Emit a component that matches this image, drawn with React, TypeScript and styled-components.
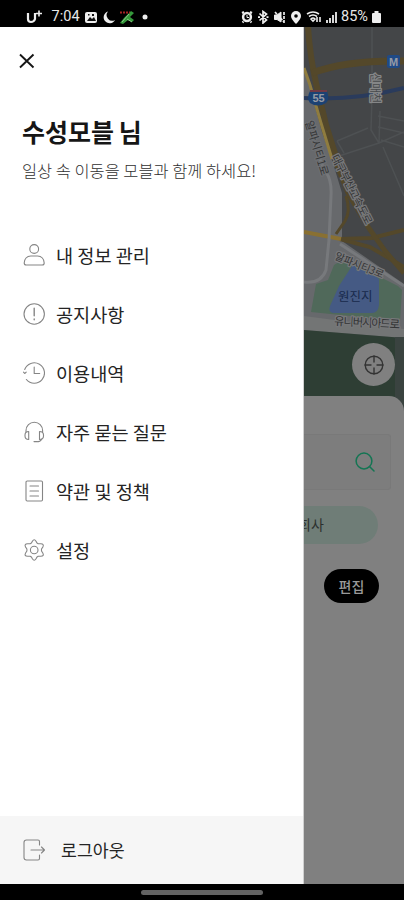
import React from "react";
import styled, { createGlobalStyle } from "styled-components";

const Global = createGlobalStyle`
  * { box-sizing: border-box; }
  body { margin: 0; background: #000; font-family: "Noto Sans CJK KR", "Noto Sans", sans-serif; }
  svg { display: block; flex: none; }
  button { font: inherit; border: 0; padding: 0; background: none; color: inherit; }
`;

const Screen = styled.div`
  width: 404px;
  height: 900px;
  display: flex;
  flex-direction: column;
  background: #000;
  overflow: hidden;
`;

const StatusBar = styled.header`
  height: 27px;
  flex: none;
  display: flex;
  align-items: center;
  justify-content: space-between;
  padding: 7px 23px 0 26px;
  color: #e8e8e8;
`;

const StatusGroup = styled.div<{ $gap: number }>`
  display: flex;
  align-items: center;
  gap: ${(p) => p.$gap}px;
`;

const StatusText = styled.span<{ $w: number }>`
  font: 400 14.5px/18px Roboto, sans-serif;
  width: ${(p) => p.$w}px;
  white-space: nowrap;
`;

const Main = styled.main`
  height: 857px;
  flex: none;
  display: grid;
  grid-template-columns: 304px 100px;
`;

const Drawer = styled.aside`
  background: #fff;
  display: flex;
  flex-direction: column;
  border-right: 1px solid #d0d0d0;
`;

const CloseButton = styled.button`
  width: 16px;
  height: 16px;
  margin: 26px 0 0 19px;
`;

const Greeting = styled.h1`
  margin: 44px 0 0 22px;
  font-size: 25px;
  line-height: 36px;
  font-weight: 700;
  color: #161616;
  white-space: nowrap;
  word-spacing: -1px;
`;

const Tagline = styled.p`
  margin: 9px 0 0 22px;
  font-size: 16.4px;
  line-height: 24px;
  font-weight: 300;
  color: #303030;
  white-space: nowrap;
`;

const Menu = styled.nav`
  margin-top: 43px;
  display: flex;
  flex-direction: column;
`;

const MenuRow = styled.a<{ $gap?: number }>`
  height: 59.1px;
  display: flex;
  align-items: center;
  gap: ${(p) => p.$gap ?? 11}px;
  padding-left: 23px;
  color: #858585;
`;

const MenuLabel = styled.span<{ $size?: number }>`
  font-size: ${(p) => p.$size ?? 18.6}px;
  line-height: 26px;
  color: #242424;
  white-space: nowrap;
`;

const DrawerFooter = styled.footer`
  margin-top: auto;
  height: 68px;
  background: #f6f6f6;
  display: flex;
  flex-direction: column;
  justify-content: center;
`;

const Backdrop = styled.section`
  background: #3b3d3e;
  display: flex;
  flex-direction: column;
  overflow: hidden;
  min-width: 0;
`;

const MapArea = styled.div`
  position: relative;
  height: 385px;
  flex: none;
`;

const LocateButton = styled.button`
  position: absolute;
  left: 48px;
  top: 316px;
  width: 43px;
  height: 43px;
  border-radius: 50%;
  background: #808080;
  color: #333;
  display: grid;
  place-items: center;
`;

const Sheet = styled.div`
  position: relative;
  margin-top: -16px;
  flex: 1;
  background: #808080;
  border-top-right-radius: 15px;
  padding-top: 38px;
  display: flex;
  flex-direction: column;
`;

const SearchField = styled.div`
  width: 87px;
  height: 56px;
  border: 1px solid #797979;
  border-left: 0;
  border-radius: 0 3px 3px 0;
  background: #7d7d7d;
  display: flex;
  align-items: center;
  justify-content: flex-end;
  padding-right: 15px;
  color: #147553;
`;

const PlaceChip = styled.div`
  width: 74px;
  height: 38px;
  margin-top: 16px;
  border-radius: 0 19px 19px 0;
  background: #6f7d77;
  overflow: hidden;
  color: #2c302e;
  font-size: 14px;
  line-height: 37px;
  white-space: nowrap;
`;

const ChipLabel = styled.span`
  display: block;
  margin-left: -6px;
`;

const EditButton = styled.button`
  width: 55px;
  height: 34px;
  margin: 25px 0 0 20px;
  border-radius: 17px;
  background: #000;
  color: #999;
  font-size: 14px;
  line-height: 33px;
  font-weight: 500;
`;

const NavigationBar = styled.footer`
  height: 16px;
  display: flex;
  justify-content: center;
  padding-top: 6px;
`;

const HomeHandle = styled.div`
  width: 122px;
  height: 5px;
  border-radius: 3px;
  background: #636363;
`;

const LineIcon = ({ children, w = 22, h = 22, sw = 1.1 }: { children: React.ReactNode; w?: number; h?: number; sw?: number }) => (
  <svg width={w} height={h} viewBox={`0 0 ${w} ${h}`} fill="none" stroke="currentColor" strokeWidth={sw} strokeLinecap="round" strokeLinejoin="round">
    {children}
  </svg>
);

const PersonIcon = () => (
  <LineIcon>
    <circle cx="11.2" cy="5" r="4.4" />
    <path d="M3.200 21h16c1.400 0 2-.8 2-2 0-4-2.700-7-6.600-7H7.800c-3.900 0-6.600 3-6.600 7 0 1.200.6 2 2 2z" />
  </LineIcon>
);

const NoticeIcon = () => (
  <LineIcon>
    <circle cx="11.200" cy="11" r="10.200" />
    <path d="M11.200 5.200v7.600M11.200 16v.7" strokeWidth="1.400" />
  </LineIcon>
);

const HistoryIcon = () => (
  <LineIcon>
    <path d="M1.700 7.500A10.200 10.200 0 1 1 3.400 17.500M.5 10.200l1.200 1.300 1.500-1.300M11.200 5v6.500h5.500" />
  </LineIcon>
);

const HeadsetIcon = () => (
  <LineIcon>
    <path d="M3 11V9.500a8.300 8.300 0 0 1 16.600 0V11" />
    <path d="M5.700 10.500v8C3.300 18.500 2 17 2 15v-1c0-2 1.300-3.500 3.700-3.500zM16.500 10.500v8c2.600 0 4-1.500 4-3.500v-1c0-2-1.400-3.500-4-3.500z" />
    <path d="M18.700 18.200c-1 1.800-2.500 2.600-5 2.600M11 20.600h3" />
  </LineIcon>
);

const TermsIcon = () => (
  <LineIcon>
    <rect x="3" y="1" width="16.500" height="20" rx="1.200" />
    <path d="M7 6h8.500M7 11h8.500M7 16h8.500" />
  </LineIcon>
);

const SettingsIcon = () => (
  <LineIcon>
    <path d="M9.400 2.300Q11.200-.9 13 2.300l1 1.800 1.200.7h2.600q3.700.1 2 3.300L18.500 10v2l1.300 2q1.700 3.200-2 3.200h-2.600l-1.200.8-1 1.800q-1.800 2.900-3.600 0L8.400 18l-1.200-.8H4.600q-3.700 0-2-3.200l1.300-2v-2L2.600 8.100q-1.700-3.200 2-3.300h2.600l1.200-.7z" />
    <circle cx="11.200" cy="11" r="3.800" />
  </LineIcon>
);

const LogoutIcon = () => (
  <LineIcon>
    <path d="M16.500 6V2.500Q16.500 1 15 1H3.500Q1 1 1 3.500v15Q1 21 3.500 21H15q1.500 0 1.500-1.500V16M8 11h13M18.500 8l3 3-3 3" />
  </LineIcon>
);

const menuItems = [
  { label: "내 정보 관리", Icon: PersonIcon },
  { label: "공지사항", Icon: NoticeIcon },
  { label: "이용내역", Icon: HistoryIcon },
  { label: "자주 묻는 질문", Icon: HeadsetIcon },
  { label: "약관 및 정책", Icon: TermsIcon },
  { label: "설정", Icon: SettingsIcon },
];

const MapLabel = styled.text<{ $fill?: string; $halo?: string }>`
  font-family: "Noto Sans CJK KR", sans-serif;
  fill: ${(p) => p.$fill ?? "#343536"};
  stroke: ${(p) => p.$halo ?? "#77787a"};
  stroke-width: 2.5px;
  stroke-linejoin: round;
  paint-order: stroke;
`;

const ShieldLabel = styled.text`
  font: 700 11px "Liberation Sans", sans-serif;
  fill: #969ba5;
`;

const CityMap = () => (
  <svg width="100" height="385" viewBox="304 27 100 385">
    <rect x="304" y="27" width="100" height="385" fill="#444648" />
    <path d="M304 68L310 88 322 132 332 160 342 193V241L404 284V340H304z" fill="#67696c" />
    <g fill="none" stroke="#4e5153" strokeWidth="1.500">
      <path d="M372 27v70l-1 33 8 13-40 13M337 141l31-13M337 141l7 12M379 143l1-32M378 116l26 5M378 127l26 6M381 140l23 7M383 147l21 49M379 143l25-11" />
    </g>
    <g fill="none" stroke="#54482a">
      <path d="M308 27q2 30 8 56l10 42 12 38" strokeWidth="6" />
      <path d="M312 73q34-13 92-12" strokeWidth="7" />
      <path d="M346 196q5 15-1 25l-9 13" strokeWidth="3" />
      <path d="M340 239l30 8 34 20M340 239l32-1 32-8" strokeWidth="4" />
      <path d="M334 158l14 35 20 34 17 24 19 22" strokeWidth="5" />
    </g>
    <path d="M304 68l6 17 11 38 11 36" fill="none" stroke="#8f7c3e" strokeWidth="3" />
    <path d="M304 232l37 7" fill="none" stroke="#897032" strokeWidth="4" />
    <path d="M304 98q50 3 100-10" fill="none" stroke="#2a3b5c" strokeWidth="4" />
    <g fill="none" stroke="#77797c" strokeWidth="3">
      <path d="M317 150q3 12 9 22 6 9 5 24l-2 44-3 30q-5 14-22 12M340 244l64 42" />
    </g>
    <path d="M311 312l5-28 12-4 6-15 10-6 54 27 4 4-2 31z" fill="#50695a" />
    <path d="M352 266q8-5 12 0l15 13v26q-1 8-7 8h-39q-5-1-3-7l9-20z" fill="#455a84" />
    <path d="M304 316l100 13v9l-100-8z" fill="#737575" />
    <path d="M304 330l100 8v74H304z" fill="#2e3e34" />
    <path d="M395 337h9v75h-9z" fill="#3a4340" />
    <rect x="387" y="55" width="13" height="13" rx="2" fill="#204a86" />
    <ShieldLabel x="389" y="65.500">M</ShieldLabel>
    <path d="M310 91h17q3 8-1 12-8 5-16 0-4-5 0-12z" fill="#1c4273" />
    <path d="M310 91h17" stroke="#713a45" strokeWidth="2" />
    <ShieldLabel x="312.500" y="102">55</ShieldLabel>
    <MapLabel x="371" y="73" fontSize="11" textLength="30" transform="rotate(90 371 73)" $fill="#484a4c" $halo="#858687">신매천</MapLabel>
    <MapLabel x="305" y="122" fontSize="11" transform="rotate(73 305 122)" $halo="#6d6f72">알파시티1로</MapLabel>
    <MapLabel x="331" y="157" fontSize="11" textLength="77" transform="rotate(63 331 157)">대구부산고속도로</MapLabel>
    <MapLabel x="334" y="259" fontSize="10.500" textLength="52" transform="rotate(22 334 259)">알파시티3로</MapLabel>
    <MapLabel x="338" y="301" fontSize="12.500" $fill="#18294b" $halo="#455a84">원진지</MapLabel>
    <MapLabel x="334" y="325" fontSize="11.500" textLength="66" transform="rotate(3 334 325)">유니버시아드로</MapLabel>
  </svg>
);

const LeftStatusIcons = () => (
  <svg width="65" height="16" viewBox="85 9 65 16">
    <rect x="85" y="12" width="12" height="11" rx="2" fill="#eee" />
    <path d="M87 21l3-4 2 2 2-2 2 4zM88 14h1.500v1.500H88zM92 14h2v2h-2z" fill="#111" />
    <path d="M108 11.500a6 6 0 1 0 7 8.500 5.600 5.600 0 0 1-7-8.500z" fill="#eee" />
    <path d="M131 11l3 2-4 4 4 3-2 2-4-2-5 4-3-1 4-5 2-2z" fill="#35993b" />
    <path d="M120 12.500h10" stroke="#a32323" strokeWidth="2" strokeDasharray="2 1" />
    <path d="M122 22l7-8M127 19l5 3" stroke="#8aca87" />
    <circle cx="145" cy="17" r="2.500" fill="#eee" />
  </svg>
);

const CarrierMark = () => (
  <svg width="17" height="14" viewBox="0 0 17 14" fill="none" stroke="#eee">
    <path d="M2 3v6q0 3 3 3t4-3V3" strokeWidth="2.200" />
    <path d="M13 .5v6M10 3.500h6" strokeWidth="1.600" />
  </svg>
);

const RightStatusIcons = () => (
  <svg width="97" height="14" viewBox="241 10 97 14" fill="none" stroke="#eee">
    <circle cx="247" cy="17" r="3.900" strokeWidth="2.500" />
    <path d="M242 13l2-1M252 13l-2-1M243.500 21.500l-1 1M250.500 21.500l1 1" strokeWidth="2" />
    <path d="M247 15v2.500h2" />
    <path d="M259.500 13.500l7 6.500-3.500 3V11.500l3.500 2.500-7 6.500M258 17.200h2M266.500 17.200h2" strokeWidth="1.700" />
    <path d="M274.500 15h2.500l4-3v10l-4-2.500h-2.500z" fill="#eee" />
    <path d="M275 12l9 10M284 12v11" strokeWidth="1.700" strokeDasharray="3 1" />
    <path d="M296 11a5 5 0 0 1 5 5q0 3-5 8-5-5-5-8a5 5 0 0 1 5-5z" fill="#eee" stroke="none" />
    <circle cx="296" cy="16" r="1.800" fill="#000" stroke="none" />
    <path d="M307 14q6-4 12 0M309 16.500q4-3 8 0M311 19q2-2 4 0l-2 2zM317 17v5M320 22v-5" strokeWidth="1.600" />
    <path d="M327 23v-3M330 23v-5M333 23v-8M336 23V12" strokeWidth="1.800" />
  </svg>
);

const BatteryIcon = () => (
  <svg width="9" height="12" viewBox="0 0 9 12">
    <path d="M2.500 0h4v2H8q1 0 1 1v8q0 1-1 1H1q-1 0-1-1V3q0-1 1-1h1.500z" fill="#eee" />
  </svg>
);

export default function App() {
  return (
    <Screen>
      <Global />
      <StatusBar>
        <StatusGroup $gap={5}>
          <CarrierMark />
          <StatusText $w={32}>&nbsp;7:04</StatusText>
          <LeftStatusIcons />
        </StatusGroup>
        <StatusGroup $gap={3}>
          <RightStatusIcons />
          <StatusText $w={28}>85%</StatusText>
          <BatteryIcon />
        </StatusGroup>
      </StatusBar>
      <Main>
        <Drawer>
          <CloseButton aria-label="닫기">
            <svg width="16" height="16" fill="none" stroke="#161616" strokeWidth="1.900">
              <path d="M1 1.500l13.500 13M14.500 1.500L1 14.500" />
            </svg>
          </CloseButton>
          <Greeting>수성모블 님</Greeting>
          <Tagline>일상 속 이동을 모블과 함께 하세요!</Tagline>
          <Menu>
            {menuItems.map(({ label, Icon }) => (
              <MenuRow key={label}>
                <Icon />
                <MenuLabel>{label}</MenuLabel>
              </MenuRow>
            ))}
          </Menu>
          <DrawerFooter>
            <MenuRow $gap={16}>
              <LogoutIcon />
              <MenuLabel $size={17.3}>로그아웃</MenuLabel>
            </MenuRow>
          </DrawerFooter>
        </Drawer>
        <Backdrop>
          <MapArea>
            <CityMap />
            <LocateButton aria-label="현재 위치">
              <LineIcon w={20} h={20} sw={1.4}>
                <circle cx="10" cy="10" r="8.800" />
                <path d="M10 1v6M10 13v6M1 10h6M13 10h6" />
              </LineIcon>
            </LocateButton>
          </MapArea>
          <Sheet>
            <SearchField>
              <LineIcon w={20} h={20} sw={1.500}>
                <circle cx="9" cy="9" r="7.900" />
                <path d="M14.500 14.500L19 19" />
              </LineIcon>
            </SearchField>
            <PlaceChip>
              <ChipLabel>회사</ChipLabel>
            </PlaceChip>
            <EditButton>편집</EditButton>
          </Sheet>
        </Backdrop>
      </Main>
      <NavigationBar>
        <HomeHandle />
      </NavigationBar>
    </Screen>
  );
}
